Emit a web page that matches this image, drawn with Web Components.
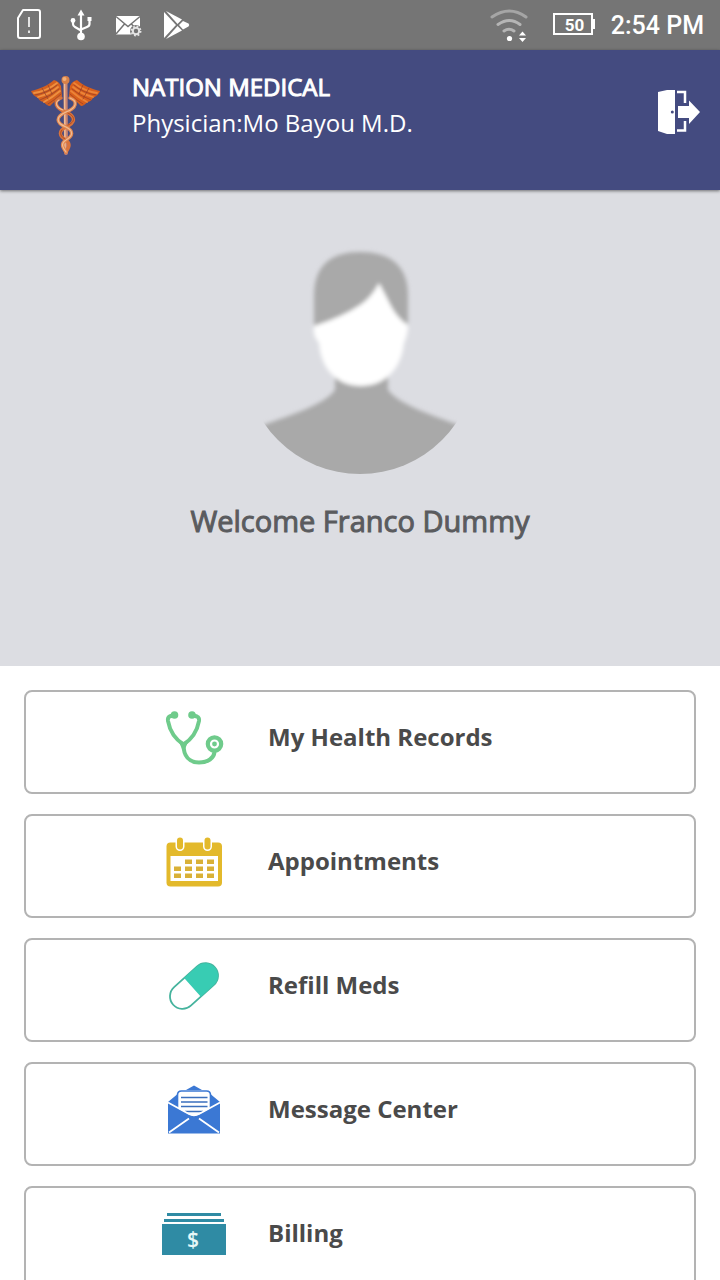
<!DOCTYPE html>
<html lang="en">
<head>
<meta charset="utf-8">
<meta name="viewport" content="width=device-width, initial-scale=1">
<title>Nation Medical</title>
<style>
body{
  margin:0;
  font-family:"Open Sans","Noto Sans",sans-serif;
  background-color:#fff;
}
</style>
</head>
<body>
<portal-app>
  <status-bar slot="top" time="2:54 PM" battery="50"></status-bar>
  <portal-header slot="top">
    <span slot="practice">NATION MEDICAL</span>
    <span slot="physician">Physician:Mo Bayou M.D.</span>
  </portal-header>
  <welcome-panel slot="top">Welcome Franco Dummy</welcome-panel>
  <menu-card icon="records">My Health Records</menu-card>
  <menu-card icon="calendar">Appointments</menu-card>
  <menu-card icon="pill">Refill Meds</menu-card>
  <menu-card icon="mail">Message Center</menu-card>
  <menu-card icon="billing">Billing</menu-card>
</portal-app>

<script>
const createTemplate = (html) => {
  const template = document.createElement('template');
  template.innerHTML = html;
  return template;
};

/* page frame: fixed top parts, the menu takes the rest */
const appTemplate = createTemplate(`
<style>
:host{
  display:flex;
  flex-direction:column;
  height:100vh;
  overflow:hidden;
}
nav{
  flex:1;
  min-height:0;
  overflow:hidden;
  display:flex;
  flex-direction:column;
  gap:20px;
  padding:24px 24px 0;
}
</style>
<slot name="top"></slot>
<nav aria-label="Main menu"><slot></slot></nav>
`);

class PortalApp extends HTMLElement {
  constructor() {
    super();
    this.attachShadow({ mode: 'open' });
    this.shadowRoot.appendChild(appTemplate.content.cloneNode(true));
  }
}

const statusTemplate = createTemplate(`
<style>
:host{
  display:flex;
  flex:none;
  justify-content:space-between;
  align-items:center;
  height:50px;
  padding:0 16px 0 8px;
  background-color:#757575;
  color:#fff;
  font-family:Roboto,sans-serif;
}
.icons,.system{
  display:flex;
  align-items:center;
}
.system{
  gap:16px;
}
svg{
  display:block;
}
.time{
  padding-top:2px;
  font-size:25px;
  font-weight:500;
  line-height:48px;
}
.level{
  font-size:17px;
  font-weight:700;
}
</style>
<div class="icons">
  <svg width="48" height="50" viewBox="0 0 48 50" fill="none" stroke="#fff">
    <path d="M15 10H30Q32 10 32 12V36Q32 38 30 38H12Q10 38 10 36V18Z" stroke-width="2" stroke-linejoin="round"/>
    <path d="M21 17V27M21 30.500V33" stroke-width="1.600"/>
  </svg>
  <svg width="48" height="50" viewBox="0 0 48 50" fill="#fff">
    <path d="M25 9.500L28.500 15.500H21.500Z"/>
    <circle cx="25" cy="36.500" r="3.800"/>
    <rect x="31.500" y="17" width="4" height="4"/>
    <circle cx="17" cy="20.500" r="2.400"/>
    <path d="M25 14V36M33.500 20V24Q33.500 26 31 27L25 29.500M17 21V24Q17 26 19 27L25 30.500" fill="none" stroke="#fff" stroke-width="2.200"/>
  </svg>
  <svg width="48" height="50" viewBox="0 0 48 50">
    <path d="M12 16H36V34.500H12Z" fill="#fff"/>
    <path d="M12 16.500L24 26.500L36 16.500M12 34L20.500 24M36 34L27.500 24" fill="none" stroke="#757575" stroke-width="1.500"/>
    <circle cx="32" cy="31" r="6" fill="#757575"/>
    <circle cx="32" cy="31" r="3.200" fill="none" stroke="#e4e4e4" stroke-width="2"/>
    <circle cx="32" cy="31" r="4.600" fill="none" stroke="#e4e4e4" stroke-width="1.800" stroke-dasharray="1.800 1.810"/>
  </svg>
  <svg width="48" height="50" viewBox="0 0 48 50" fill="#fff">
    <path d="M12 12L24 25L12 38Z"/>
    <path d="M14 11L30 19.500L25.500 24Z"/>
    <path d="M14 39L30 30.500L25.500 26Z"/>
    <path d="M31 21L36.500 23.500Q38 25 36.500 26.500L31 29.500L27 25Z"/>
  </svg>
</div>
<div class="system">
  <svg width="48" height="50" viewBox="0 0 48 50" fill="none" stroke-width="3" stroke-linecap="round">
    <path d="M3 17Q20.500 5 37 17" stroke="#a5a5a5"/>
    <path d="M9 24.500Q20.500 16.500 31 24.500" stroke="#b5b5b5"/>
    <path d="M15 31Q20 27.500 25 31" stroke="#b5b5b5"/>
    <circle cx="20.500" cy="38.500" r="2.600" fill="#fff"/>
    <path d="M33.500 31.500L37 35.500H30ZM33.500 42L37 38H30Z" fill="#fff"/>
  </svg>
  <svg width="42" height="50" viewBox="0 0 42 50">
    <rect x="1" y="14" width="38" height="20" fill="none" stroke="#fff" stroke-width="2"/>
    <rect x="39" y="19" width="3" height="10" fill="#fff"/>
    <text class="level" x="21.500" y="31" text-anchor="middle" fill="#fff"></text>
  </svg>
  <span class="time"></span>
</div>
`);

class StatusBar extends HTMLElement {
  constructor() {
    super();
    this.attachShadow({ mode: 'open' });
    this.shadowRoot.appendChild(statusTemplate.content.cloneNode(true));
  }
  connectedCallback() {
    this.shadowRoot.querySelector('.time').textContent = this.getAttribute('time');
    this.shadowRoot.querySelector('.level').textContent = this.getAttribute('battery');
  }
}

const headerTemplate = createTemplate(`
<style>
:host{
  display:block;
  flex:none;
  position:relative;
  z-index:1;
  background-color:#444b80;
  box-shadow:0 1px 3px rgba(0,0,0,.5);
  color:#fff;
}
header{
  display:flex;
  align-items:flex-start;
  gap:30px;
  height:121px;
  padding:19px 18px 0 30px;
}
.logo{
  flex:none;
  margin-top:5px;
}
.names{
  flex:1;
  font-size:24px;
  line-height:36px;
}
.names>div{
  white-space:nowrap;
}
.practice{
  -webkit-text-stroke:1px #fff;
}
button{
  margin-top:19px;
  padding:0;
  border:0;
  background:none;
  cursor:pointer;
}
svg{
  display:block;
}
</style>
<header>
  <svg class="logo" width="72" height="84" viewBox="0 0 72 84" fill="none" stroke-linecap="round">
    <g>
      <path d="M31 12C29 8 27 7 24 6C19 11 9 15 1 17C3 22 7 23 8 24C10 27 12 28 14 28C15 30 18 32 20 32L27 25L32 22Z" fill="#d4601f"/>
      <path d="M4 19Q17 17 27 9M8 23Q20 20 28 13M14 28Q23 23 30 17" stroke="#ee9040" stroke-width="1.800"/>
      <path d="M5 21Q18 19 27 11M10 26Q21 22 29 15M18 30Q25 26 31 20M18 11L22 20M12 14L18 25" stroke="#8f3f2c" stroke-width=".7"/>
    </g>
    <g transform="translate(71 0) scale(-1 1)">
      <path d="M31 12C29 8 27 7 24 6C19 11 9 15 1 17C3 22 7 23 8 24C10 27 12 28 14 28C15 30 18 32 20 32L27 25L32 22Z" fill="#d95f1c"/>
      <path d="M4 19Q17 17 27 9M8 23Q20 20 28 13M14 28Q23 23 30 17" stroke="#ec8438" stroke-width="1.800"/>
      <path d="M5 21Q18 19 27 11M10 26Q21 22 29 15M18 30Q25 26 31 20M18 11L22 20M12 14L18 25" stroke="#963b25" stroke-width=".7"/>
    </g>
    <path d="M35.500 8L36 79" stroke="#c98472" stroke-width="4"/>
    <path d="M34.500 8L35 76" stroke="#f2bd93" stroke-width="1.500"/>
    <circle cx="35.500" cy="6" r="4" fill="#d98149"/>
    <circle cx="34.500" cy="5" r="2" fill="#f2b07a"/>
    <path d="M31 24C23 27 25 34 36 38C47 43 45 49 36 53C28 57 29 62 36 66C41 70 39 73 36 78" stroke="#d9733c" stroke-width="3.400"/>
    <path d="M40 24C48 27 47 34 36 38C25 43 26 49 36 53C44 57 43 62 36 66C30 70 33 74 36 78" stroke="#e3864c" stroke-width="3.400"/>
    <path d="M40 24C48 27 47 34 36 38C25 43 26 49 36 53C44 57 43 62 36 66C30 70 33 74 36 78M29 26C24 29 27 34 33 36" stroke="#efbc96" stroke-width="1.200"/>
    <path d="M38 39C46 43 45 48 38 51M32 56C29 59 31 63 35 65" stroke="#b24c22" stroke-width="1"/>
  </svg>
  <div class="names">
    <div class="practice"><slot name="practice"></slot></div>
    <div><slot name="physician"></slot></div>
  </div>
  <button type="button" aria-label="Log out">
    <svg width="44" height="48" viewBox="0 0 44 48">
      <path d="M0 4L9 2H17V46H9L0 43Z" fill="#fff"/>
      <circle cx="14.300" cy="24" r="1.500" fill="#444b80"/>
      <path d="M19 4H27V15M19 42.500H27V33" fill="none" stroke="#fff" stroke-width="2.500"/>
      <path d="M20 18H31V12.500L42 24L31 36V30H20Z" fill="#fff"/>
    </svg>
  </button>
</header>
`);

class PortalHeader extends HTMLElement {
  constructor() {
    super();
    this.attachShadow({ mode: 'open' });
    this.shadowRoot.appendChild(headerTemplate.content.cloneNode(true));
    this.shadowRoot.querySelector('button').addEventListener('click', () => {
      this.dispatchEvent(new Event('logout'));
    });
  }
}

const welcomeTemplate = createTemplate(`
<style>
:host{
  display:flex;
  flex:none;
  flex-direction:column;
  align-items:center;
  gap:27px;
  padding:52px 0 125px;
  background-color:#dcdde2;
  color:#5a5b5e;
}
.avatar{
  display:block;
  border-radius:50%;
}
h1{
  margin:0;
  font-size:29px;
  font-weight:400;
  line-height:40px;
  -webkit-text-stroke:1px #5a5b5e;
}
</style>
<svg class="avatar" width="232" height="232" viewBox="0 0 232 232" role="img" aria-label="Profile photo">
  <defs><filter id="soft"><feGaussianBlur stdDeviation="2"/></filter></defs>
  <g filter="url(#soft)">
    <path d="M91 134H144V148C156 163 188 173 214 183L250 250H-20L20 183C46 173 80 163 91 148Z" fill="#a9a9a9"/>
    <path d="M70 84V54C70 24 86 10 116 10C147 10 164 24 164 54V84Z" fill="#a9a9a9"/>
    <path d="M70 84Q98 75 116 63Q127 56 135 41Q140 50 147 64Q154 77 164 83Q164 92 160 101C157 129 139 144 117 144C95 144 77 129 75 101Q68 93 70 84Z" fill="#fff"/>
  </g>
</svg>
<h1><slot></slot></h1>
`);

class WelcomePanel extends HTMLElement {
  constructor() {
    super();
    this.attachShadow({ mode: 'open' });
    this.shadowRoot.appendChild(welcomeTemplate.content.cloneNode(true));
  }
}

const icons = {
  records: `
    <g fill="none" stroke="#6fcb8b" stroke-width="4" stroke-linecap="round" stroke-linejoin="round">
      <path d="M14 10L9.500 11.500Q7.500 12.500 8 16C10 27 15 34 23.500 39.500C32 34 37 27 39 16Q39.500 12.500 37 11.500L32 10"/>
      <path d="M23.500 39.500C23.500 51 29 57.500 39 57.500C48 57.500 54 53 54.500 47"/>
    </g>
    <path d="M18 35Q23.500 39 29 35L25 44H22Z" fill="#6fcb8b"/>
    <circle cx="14.500" cy="10" r="3.800" fill="#6fcb8b"/>
    <circle cx="32" cy="10" r="3.800" fill="#6fcb8b"/>
    <circle cx="54.500" cy="39" r="6.700" fill="#fff" stroke="#6fcb8b" stroke-width="4.200"/>
    <circle cx="54.500" cy="39" r="2.400" fill="#6fcb8b"/>`,
  calendar: `
    <rect x="6.500" y="13.500" width="55.500" height="44" rx="4" fill="#e3b92b"/>
    <rect x="10.500" y="27" width="47.500" height="25" fill="#fff"/>
    <rect x="17" y="8.500" width="6" height="12" rx="3" fill="#e3b92b" stroke="#fff" stroke-width="3" paint-order="stroke"/>
    <rect x="44.500" y="8.500" width="6" height="12" rx="3" fill="#e3b92b" stroke="#fff" stroke-width="3" paint-order="stroke"/>
    <path d="M25 30.500h7v4.500h-7zM36 30.500h7v4.500h-7zM47 30.500h7v4.500h-7zM14 37.500h7v4.500h-7zM25 37.500h7v4.500h-7zM36 37.500h7v4.500h-7zM47 37.500h7v4.500h-7zM14 44.500h7v4.500h-7zM25 44.500h7v4.500h-7zM36 44.500h7v4.500h-7zM47 44.500h7v4.500h-7z" fill="#d9b137"/>`,
  pill: `
    <g transform="translate(34 33) rotate(-42)">
      <rect x="-28" y="-12.500" width="56" height="25" rx="12.500" fill="#fff" stroke="#45b39d" stroke-width="1.800"/>
      <path d="M-2 -12.500H15.500A12.500 12.500 0 0 1 15.500 12.500H-2Z" fill="#38ccb3"/>
    </g>`,
  mail: `
    <path d="M26 13L34 8.500L42 13ZM8 25L17 17.500V31H8ZM60 25L51 17.500V31H60Z" fill="#3b78d4"/>
    <path d="M17.500 34V18Q17.500 14 21.500 14H46.500Q50.500 14 50.500 18V34" fill="#fff" stroke="#3b78d4" stroke-width="1.600"/>
    <path d="M21 20.500H47.500M21 25H47.500M21 29.500H47.500M25 34.500H43" stroke="#3b6fbd" stroke-width="1.700"/>
    <path d="M8 26L29 37.500Q34 40 39 37.500L60 26V56.500H8Z" fill="#3b78d4"/>
    <path d="M8 25.500L29 37Q34 39.500 39 37L60 25.500" fill="none" stroke="#fff" stroke-width="1.800"/>
    <path d="M9 55.500L29 41.500M59 55.500L39 41.500" stroke="#fff" stroke-width="1.800"/>`,
  billing: `
    <path d="M7 12H61V15H7ZM4 18H64V21H4ZM2 23H66V54H2Z" fill="#2f8ba4"/>
    <text x="33" y="46" text-anchor="middle" font-size="21" font-weight="600" fill="#e6f7f7">$</text>`
};

const cardTemplate = createTemplate(`
<style>
:host{
  display:block;
  flex:none;
}
button{
  display:flex;
  align-items:center;
  gap:40px;
  width:100%;
  height:104px;
  padding:0 20px 10px 134px;
  border:2px solid #b3b3b3;
  border-radius:8px;
  background-color:#fff;
  color:#4a4a4a;
  font-family:inherit;
  font-size:24px;
  font-weight:700;
  line-height:32px;
  text-align:left;
  cursor:pointer;
}
svg{
  display:block;
  flex:none;
}
</style>
<button type="button">
  <svg width="68" height="64" viewBox="0 0 68 64" aria-hidden="true"></svg>
  <span><slot></slot></span>
</button>
`);

class MenuCard extends HTMLElement {
  constructor() {
    super();
    this.attachShadow({ mode: 'open' });
    this.shadowRoot.appendChild(cardTemplate.content.cloneNode(true));
  }
  connectedCallback() {
    this.shadowRoot.querySelector('svg').innerHTML = icons[this.getAttribute('icon')] || '';
  }
}

customElements.define('portal-app', PortalApp);
customElements.define('status-bar', StatusBar);
customElements.define('portal-header', PortalHeader);
customElements.define('welcome-panel', WelcomePanel);
customElements.define('menu-card', MenuCard);
</script>
</body>
</html>
